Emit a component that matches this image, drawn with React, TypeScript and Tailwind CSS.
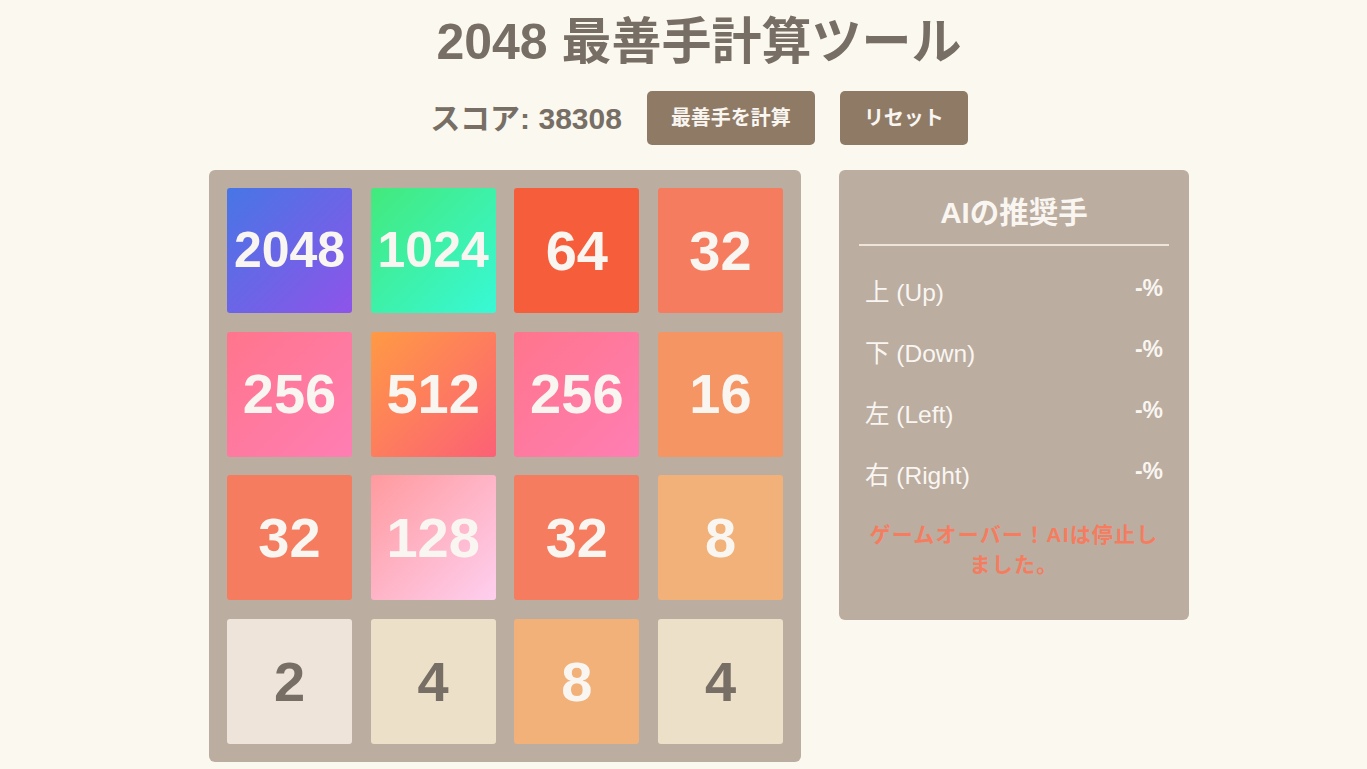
const tileStyles: Record<number, string> = {
  2: "bg-[#eee4da] text-[#776e65]",
  4: "bg-[#ede0c8] text-[#776e65]",
  8: "bg-[#f2b179] text-[#f9f6f2]",
  16: "bg-[#f59563] text-[#f9f6f2]",
  32: "bg-[#f67c5f] text-[#f9f6f2]",
  64: "bg-[#f65e3b] text-[#f9f6f2]",
  128: "bg-[linear-gradient(135deg,#ff9a9e,#fecfef)] text-[#f9f6f2]",
  256: "bg-[linear-gradient(135deg,#ff758c,#ff7eb3)] text-[#f9f6f2]",
  512: "bg-[linear-gradient(135deg,#ff9a44,#fc6076)] text-[#f9f6f2]",
  1024: "bg-[linear-gradient(135deg,#43e97b,#38f9d7)] text-[#f9f6f2]",
  2048: "bg-[linear-gradient(135deg,#4776e6,#8e54e9)] text-[#f9f6f2]",
};

const board = [
  [2048, 1024, 64, 32],
  [256, 512, 256, 16],
  [32, 128, 32, 8],
  [2, 4, 8, 4],
];

const moves = [
  { label: "上 (Up)", value: "-%" },
  { label: "下 (Down)", value: "-%" },
  { label: "左 (Left)", value: "-%" },
  { label: "右 (Right)", value: "-%" },
];

function Tile({ value }: { value: number }) {
  const big = value >= 1000;
  return (
    <div
      className={`aspect-square rounded-[3px] flex items-center justify-center font-bold ${
        big ? "text-[50px]" : "text-[56px]"
      } ${tileStyles[value]}`}
    >
      {value}
    </div>
  );
}

export default function App() {
  return (
    <div
      className="min-h-screen bg-[#faf8ef] text-[#776e65] pl-[31px]"
      style={{ fontFamily: '"Liberation Sans", Arial, "Noto Sans CJK JP", sans-serif' }}
    >
      <h1 className="pt-[14px] text-center text-[50px] font-bold leading-[56px]">2048 最善手計算ツール</h1>

      <div className="mt-[21px] flex items-center justify-center gap-[25px]">
        <span className="text-[30px] font-bold">スコア: 38308</span>
        <button className="h-[54px] px-6 rounded-[5px] bg-[#8f7a66] text-[#f9f6f2] text-[20px] font-bold">
          最善手を計算
        </button>
        <button className="h-[54px] px-6 rounded-[5px] bg-[#8f7a66] text-[#f9f6f2] text-[20px] font-bold">
          リセット
        </button>
      </div>

      <div className="mt-[25px] flex items-start justify-center gap-[38px]">
        <div className="w-[592px] rounded-[6px] bg-[#bbada0] p-[18px] grid grid-cols-4 gap-[18.67px]">
          {board.flat().map((v, i) => (
            <Tile key={i} value={v} />
          ))}
        </div>

        <div className="w-[350px] rounded-[6px] bg-[#bbada0] px-5 pt-5 text-[#f9f6f2]">
          <h2 className="mt-[3px] pb-[11px] border-b-2 border-[#eee4da] text-center text-[29.5px] font-bold leading-[40px]">
            AIの推奨手
          </h2>
          <div className="mt-[30px] flex flex-col gap-[27px] px-[6px]">
            {moves.map((m) => (
              <div key={m.label} className="flex items-start justify-between">
                <span className="text-[24.5px] leading-[34px]">{m.label}</span>
                <span className="text-[23px] font-bold leading-[24px]">{m.value}</span>
              </div>
            ))}
          </div>
          <p className="mt-[27px] pb-10 text-center text-[21px] tracking-[1.2px] font-bold leading-[30px] text-[#f67c5f]">
            ゲームオーバー！AIは停止しました。
          </p>
        </div>
      </div>
    </div>
  );
}
